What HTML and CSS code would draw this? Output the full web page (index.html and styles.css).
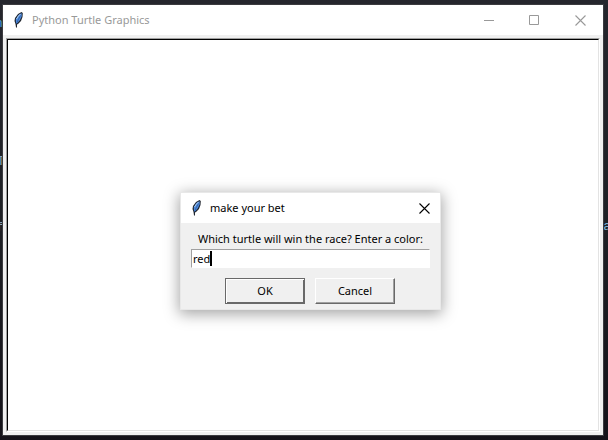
FILE: index.html
```html
<!DOCTYPE html>
<html lang="en">
<head>
<meta charset="utf-8">
<title>Python Turtle Graphics</title>
<link rel="stylesheet" href="styles.css">
</head>
<body>
<div class="backdrop" aria-hidden="true">
  <span class="code code-first">n</span>
  <span class="code code-second">T</span>
  <span class="code code-third">f</span>
  <span class="code code-right">a</span>
</div>
<svg class="defs" aria-hidden="true">
  <symbol id="feather" viewBox="0 0 12 18">
    <path d="M3 16.500 L2.500 13 L1.500 10 L2 7 L5 3 L8.500 1 L9.800 2 L9.500 6 L8 10 L5 13 L4 13.500 L4 16.500 Z" fill="#20252d"/>
    <path d="M3 12 L2.800 8 L5.500 4 L8.500 2 L8.800 5 L7 9 L4.500 12 Z" fill="#4e8ade"/>
    <path d="M3.500 8 L5.500 5 L7.500 3" fill="none" stroke="#a9caec"/>
    <path d="M7.500 4.500 L5 9 L3.500 13" fill="none" stroke="#28589c" stroke-width=".8"/>
  </symbol>
  <symbol id="close" viewBox="0 0 11 11">
    <path d="M.5 .5 L10.500 10.500 M10.500 .5 L.5 10.500" fill="none" stroke="currentColor" stroke-width="1.100"/>
  </symbol>
</svg>
<main class="window">
  <header class="titlebar">
    <svg class="feather"><use href="#feather"/></svg>
    <h1 class="title">Python Turtle Graphics</h1>
    <div class="controls">
      <button class="control" type="button" aria-label="Minimize"><svg class="glyph" viewBox="0 0 11 11"><path d="M1 5.500H11" stroke="currentColor"/></svg></button>
      <button class="control" type="button" aria-label="Maximize"><svg class="glyph" viewBox="0 0 11 11"><path d="M.5 .5H9.500V9.500H.5Z" fill="none" stroke="currentColor"/></svg></button>
      <button class="control" type="button" aria-label="Close"><svg class="glyph"><use href="#close"/></svg></button>
    </div>
  </header>
  <div class="frame"><div class="canvas"></div></div>
</main>
<form class="dialog" role="dialog" aria-labelledby="dialog-title">
  <header class="titlebar">
    <svg class="feather"><use href="#feather"/></svg>
    <h2 class="title" id="dialog-title">make your bet</h2>
    <button class="control dialog-close" type="button" aria-label="Close"><svg class="glyph"><use href="#close"/></svg></button>
  </header>
  <div class="content">
    <label class="prompt" for="bet">Which turtle will win the race? Enter a color:</label>
    <div class="field">
      <input class="entry" id="bet" type="text" value="red">
      <span class="caret"></span>
    </div>
    <div class="actions">
      <button class="button default" type="submit">OK</button>
      <button class="button" type="button">Cancel</button>
    </div>
  </div>
</form>
</body>
</html>
```
FILE: styles.css
```css
* { box-sizing: border-box; }

body {
  display: flex;
  min-height: 100vh;
  margin: 0;
  padding: 5px 5px 5px 3px;
  position: relative;
  overflow: hidden;
  background: #1b1a20;
  color: #000;
  font: 11px/16px "Noto Sans", sans-serif;
}

.defs { position: absolute; width: 0; height: 0; }
.backdrop { position: absolute; inset: 0; overflow: hidden; background: linear-gradient(#25262d, #1e2025 50%, #141219); }
.code { position: absolute; font: 13px/16px "Liberation Mono", monospace; }
.code-first { left: -5px; top: 16px; color: #4d9ad6; }
.code-second { left: -3px; top: 154px; color: #8aa4b8; }
.code-third { left: -4px; top: 220px; color: #8aa4b8; }
.code-right { right: -3px; top: 219px; color: #7cb2d8; }

.window {
  position: relative;
  display: flex;
  flex: 1;
  flex-direction: column;
  background: #f0f0f0;
  box-shadow: 0 0 0 1px #3b3b3f;
}

.titlebar {
  display: flex;
  flex: none;
  align-items: center;
  height: 30px;
  padding-left: 10px;
  background: #fff;
  color: #999;
}

.feather { width: 12px; height: 18px; margin-right: 7px; }
.title { flex: 1; margin: 0; font: inherit; }
.controls { display: flex; align-self: stretch; }

.control {
  display: flex;
  align-items: center;
  justify-content: center;
  width: 46px;
  height: 100%;
  padding: 0;
  border: 0;
  background: transparent;
  color: inherit;
}

.glyph { width: 11px; height: 11px; }

.frame {
  display: flex;
  flex: 1;
  margin: 3px;
  border: 1px solid;
  border-color: #a0a0a0 #fff #fff #a0a0a0;
}

.canvas {
  flex: 1;
  border: 1px solid;
  border-color: #000 #e3e3e3 #e3e3e3 #000;
  background: #fff;
}

.dialog {
  position: absolute;
  left: 180px;
  top: 192px;
  width: 261px;
  border: 1px solid #e8e8e8;
  background: #f0f0f0;
  box-shadow: 0 3px 14px 1px rgba(0, 0, 0, .36);
}

.dialog .titlebar { color: #000; }
.dialog .dialog-close { width: 32px; }
.content { padding: 8px 10px 5px; }
.prompt { display: flex; justify-content: center; white-space: nowrap; }

.field {
  display: flex;
  position: relative;
  margin-top: 2px;
}

.entry {
  width: 100%;
  height: 19px;
  padding: 0 1px;
  border: 1px solid;
  border-color: #a0a0a0 #fff #fff #a0a0a0;
  border-radius: 0;
  outline: 0;
  background: #fff;
  color: #000;
  font: inherit;
}

.caret { position: absolute; left: 19px; top: 2px; width: 2px; height: 15px; background: #000; }

.actions {
  display: flex;
  justify-content: center;
  gap: 10px;
  margin: 10px 1px 0 0;
}

.button {
  width: 80px;
  height: 26px;
  padding: 0;
  border: 1px solid;
  border-color: #fff #696969 #696969 #fff;
  border-radius: 0;
  background: #f0f0f0;
  box-shadow: inset -1px -1px #a0a0a0;
  color: #000;
  font: inherit;
}

.default { border-color: #696969; box-shadow: inset 1px 1px #fff, inset -1px -1px #696969; }
```
